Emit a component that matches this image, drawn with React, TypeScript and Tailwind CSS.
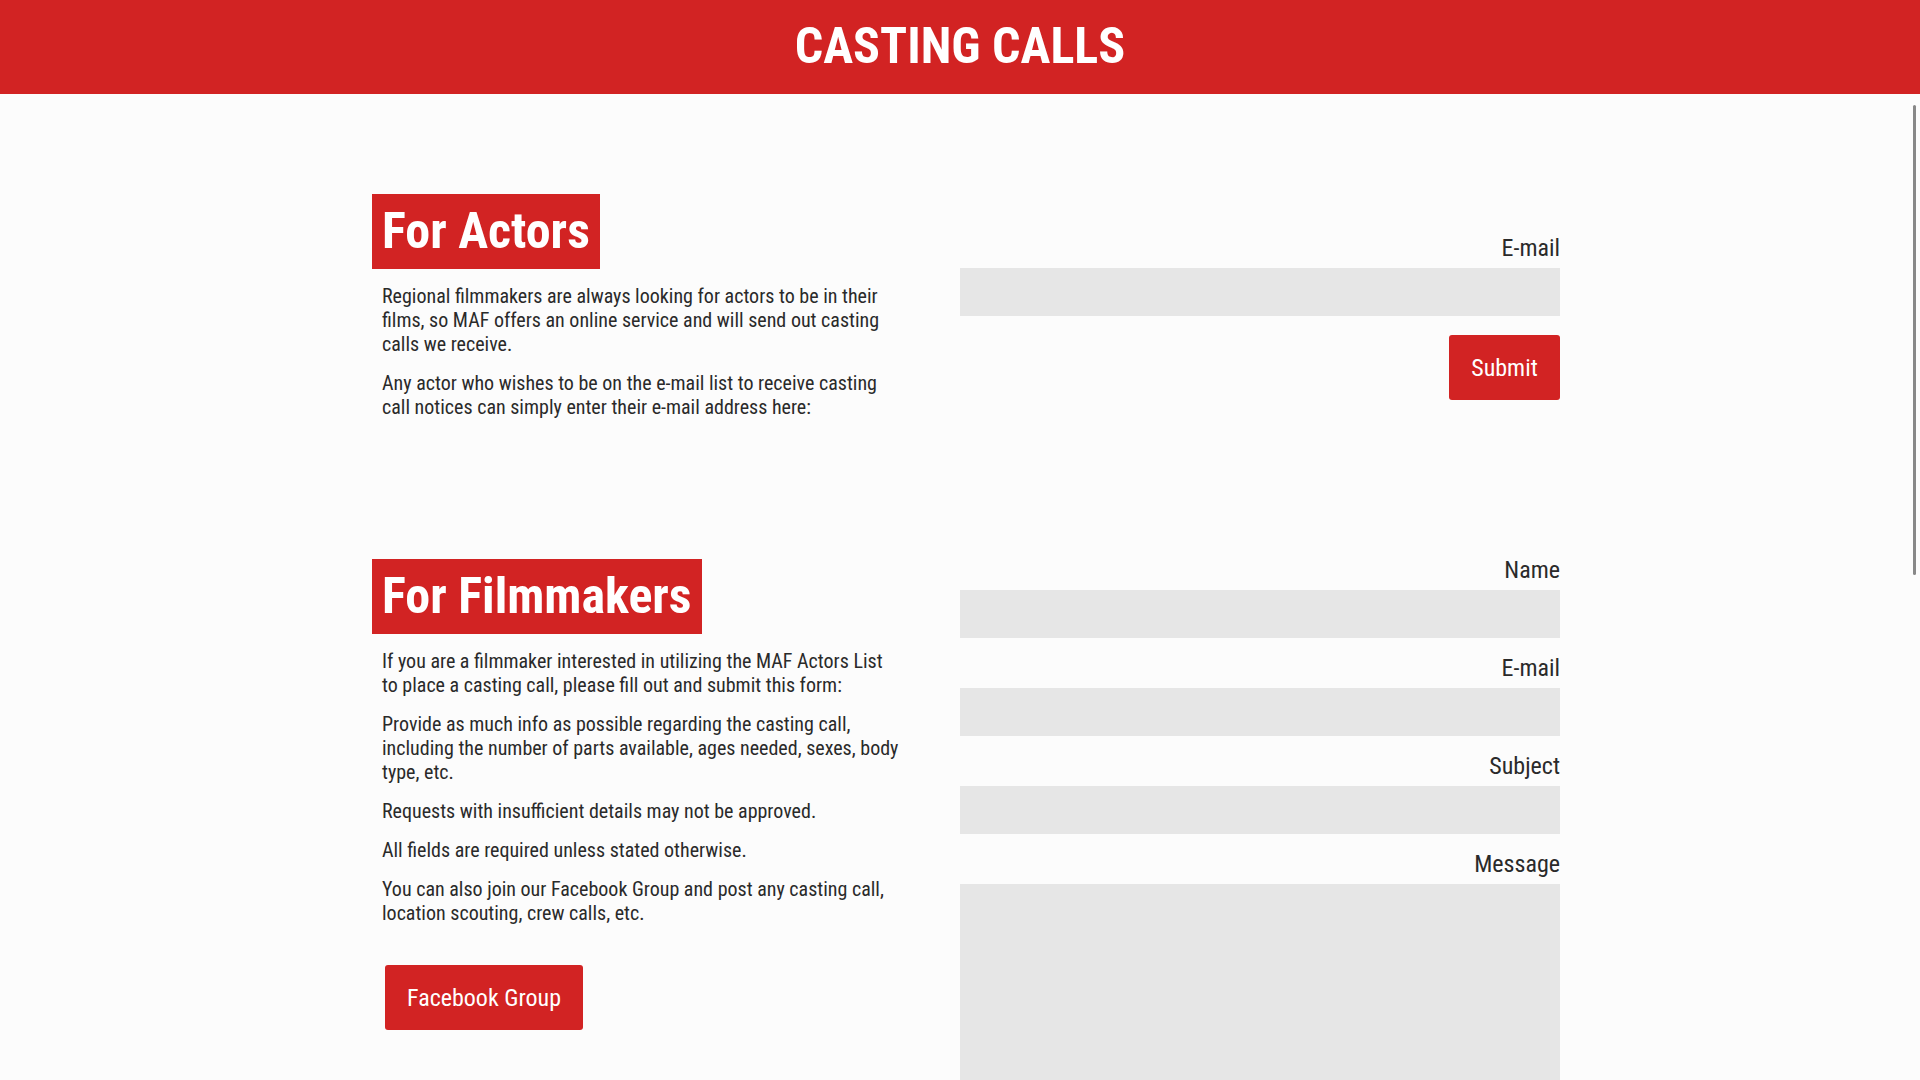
function Field({ label, tall }: { label: string; tall?: boolean }) {
  return (
    <div className="mb-[16px]">
      <label className="block text-right text-[24px] leading-[29px] mb-[5px] text-[#2a2a2a]">{label}</label>
      {tall ? (
        <textarea className="block w-full h-[260px] bg-[#e6e6e6] outline-none resize-none" />
      ) : (
        <input type="text" className="block w-full h-[48px] bg-[#e6e6e6] outline-none" />
      )}
    </div>
  );
}

function Heading({ children }: { children: React.ReactNode }) {
  return (
    <h2 className="inline-block bg-[#d22323] text-white font-bold text-[50px] leading-[75px] h-[75px] px-[10px]">
      {children}
    </h2>
  );
}

export default function App() {
  return (
    <div className="relative h-screen overflow-hidden bg-[#fcfcfc] text-[#2a2a2a] font-['Roboto_Condensed','Roboto',sans-serif]">
      <header className="h-[94px] bg-[#d22323] flex items-center justify-center pb-[2px]">
        <h1 className="text-white font-bold text-[50px] leading-none">CASTING CALLS</h1>
      </header>

      <main className="w-[1200px] mx-auto pt-[100px]">
        <section className="flex">
          <div className="w-[600px] pl-3">
            <Heading>For Actors</Heading>
            <div className="mt-[15px] pl-[10px] w-[527px] text-[20px] leading-[24px] space-y-[15px]">
              <p>
                Regional filmmakers are always looking for actors to be in their films, so MAF offers an online
                service and will send out casting calls we receive.
              </p>
              <p>
                Any actor who wishes to be on the e-mail list to receive casting call notices can simply enter their
                e-mail address here:
              </p>
            </div>
          </div>
          <div className="w-[600px] pt-[40px]">
            <label className="block text-right text-[24px] leading-[29px] mb-[5px] text-[#2a2a2a]">E-mail</label>
            <input type="text" className="block w-full h-[48px] bg-[#e6e6e6] outline-none" />
            <div className="flex justify-end mt-[19px]">
              <button className="h-[65px] w-[111px] bg-[#d22323] text-white text-[24px] rounded-[3px]">Submit</button>
            </div>
          </div>
        </section>

        <section className="flex mt-[137px]">
          <div className="w-[600px] pl-3 pt-[3px]">
            <Heading>For Filmmakers</Heading>
            <div className="mt-[15px] pl-[10px] w-[527px] text-[20px] leading-[24px] space-y-[15px]">
              <p>
                If you are a filmmaker interested in utilizing the MAF Actors List to place a casting call, please
                fill out and submit this form:
              </p>
              <p>
                Provide as much info as possible regarding the casting call, including the number of parts available,
                ages needed, sexes, body type, etc.
              </p>
              <p>Requests with insufficient details may not be approved.</p>
              <p>All fields are required unless stated otherwise.</p>
              <p>
                You can also join our Facebook Group and post any casting call, location scouting, crew calls, etc.
              </p>
            </div>
            <button className="mt-[40px] ml-[13px] h-[65px] w-[198px] bg-[#d22323] text-white text-[24px] rounded-[3px]">
              Facebook Group
            </button>
          </div>
          <div className="w-[600px]">
            <Field label="Name" />
            <Field label="E-mail" />
            <Field label="Subject" />
            <Field label="Message" tall />
          </div>
        </section>
      </main>

      <div className="absolute right-[4px] top-[105px] w-[3px] h-[470px] bg-[#888] rounded-full" />
    </div>
  );
}
